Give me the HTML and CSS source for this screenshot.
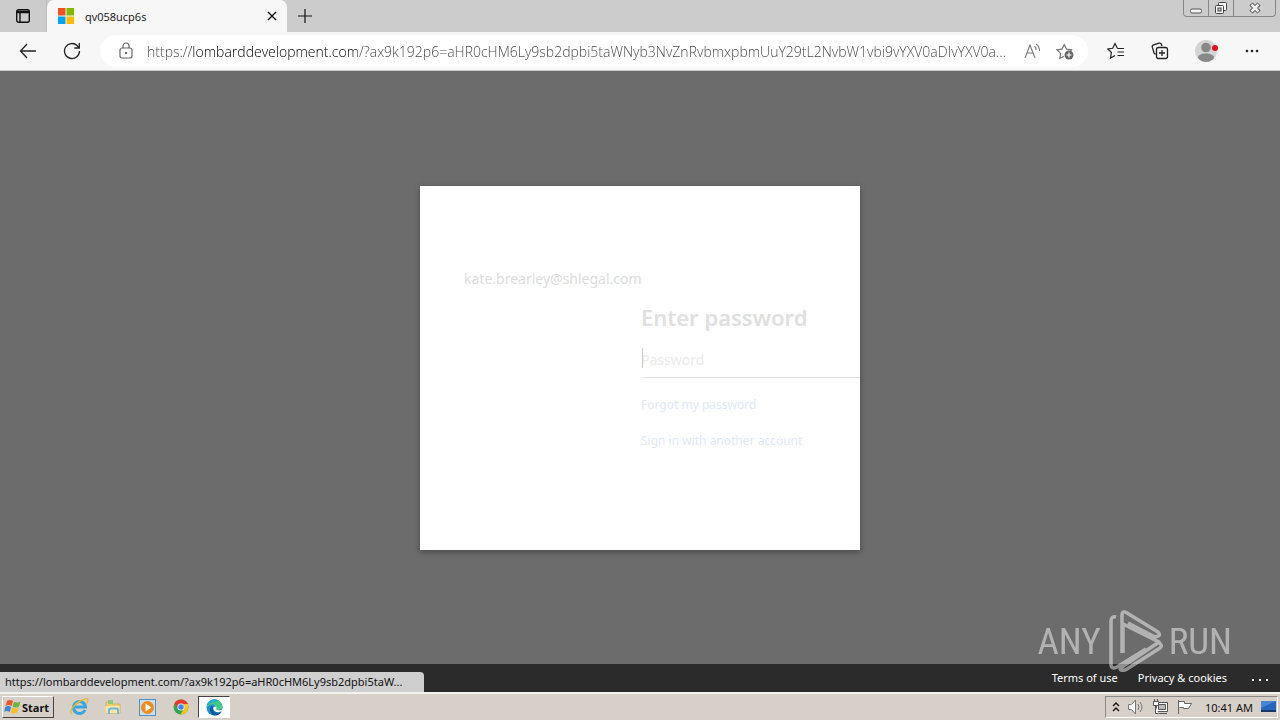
FILE: index.html
```html
<!DOCTYPE html>
<html lang="en">
<head>
<meta charset="utf-8">
<title>qv058ucp6s</title>
<link rel="stylesheet" href="styles.css">
</head>
<body>
<header class="tabstrip">
  <button class="tab-actions" aria-label="Tab actions">
    <svg width="16" height="16" viewBox="0 0 16 16" fill="none" stroke="#111" stroke-width="1.4"><rect x="1.7" y="1.7" width="12.6" height="12.6" rx="2"/><path d="M2 3.5h12M2 4.5h12M5 5v9"/></svg>
  </button>
  <div class="tab">
    <svg width="16" height="16" viewBox="0 0 16 16"><path fill="#f25022" d="M0 0h7.5v7.5H0z"/><path fill="#7fba00" d="M8.5 0H16v7.5H8.5z"/><path fill="#00a4ef" d="M0 8.5h7.5V16H0z"/><path fill="#ffb900" d="M8.5 8.5H16V16H8.5z"/></svg>
    <span class="tab-title">qv058ucp6s</span>
    <button class="icon" aria-label="Close tab"><svg width="10" height="10" viewBox="0 0 10 10" stroke="#111" stroke-width="1.4"><path d="M1 1l8 8M9 1L1 9"/></svg></button>
  </div>
  <button class="new-tab" aria-label="New tab"><svg width="16" height="16" viewBox="0 0 16 16" stroke="#111" stroke-width="1.2"><path d="M8 1v14M1 8h14"/></svg></button>
  <div class="window-buttons">
    <button class="wb" aria-label="Minimize"><svg width="14" height="14" viewBox="0 0 14 14"><rect x="1.5" y="8" width="11" height="4" rx="1.5" fill="#f4f4f4" stroke="#555"/></svg></button>
    <button class="wb" aria-label="Restore"><svg width="14" height="14" viewBox="0 0 14 14" fill="#f4f4f4" stroke="#444"><rect x="4.500" y="1.500" width="8" height="8" rx="1"/><rect x="1.500" y="4.500" width="8" height="8" rx="1"/><rect x="4" y="7" width="3" height="3" fill="#ccc"/></svg></button>
    <button class="wb wb-close" aria-label="Close"><svg width="14" height="14" viewBox="0 0 14 14" fill="none"><path d="M3 3l8 8M11 3l-8 8" stroke="#555" stroke-width="4.500"/><path d="M3.500 3.500l7 7M10.500 3.500l-7 7" stroke="#f4f4f4" stroke-width="2.500"/></svg></button>
  </div>
</header>

<nav class="toolbar">
  <button class="tool" aria-label="Back"><svg width="18" height="16" viewBox="0 0 18 16" fill="none" stroke="#222" stroke-width="1.3"><path d="M17 8H1.500M8 1L1.500 8 8 15"/></svg></button>
  <button class="tool" aria-label="Refresh"><svg width="18" height="18" viewBox="0 0 18 18" fill="none" stroke="#222" stroke-width="1.3"><path d="M16.500 9a7.500 7.500 0 1 1-2.200-5.300L16 5.500M16.300 1v5h-5"/></svg></button>
  <div class="address">
    <svg width="14" height="18" viewBox="0 0 14 18" fill="none" stroke="#666" stroke-width="1.200"><rect x="1" y="6" width="12" height="10" rx="2"/><path d="M4 6V4a3 3 0 0 1 6 0v2"/><circle cx="7" cy="11" r=".6" fill="#666"/></svg>
    <input class="url" type="text" aria-label="Address" value="https://lombarddevelopment.com/?ax9k192p6=aHR0cHM6Ly9sb2dpbi5taWNyb3NvZnRvbmxpbmUuY29tL2NvbW1vbi9vYXV0aDIvYXV0a…">
    <button class="icon" aria-label="Read aloud"><svg width="18" height="16" viewBox="0 0 18 16" fill="none" stroke="#777" stroke-width="1.100"><path d="M1 15L6 2l5 13M3 10h6M10.500 3a5 5 0 0 1 1.500 4M12 1a8 8 0 0 1 3.500 7"/></svg></button>
    <button class="icon" aria-label="Add to favorites"><svg width="19" height="18" viewBox="0 0 19 18" fill="none" stroke="#777" stroke-width="1.200"><path d="M8 14.200l-4.200 2.200.8-5L1 7.800l5-.7L8.300 2.500l2.200 4.600 5 .7-1 1.200"/><circle cx="13" cy="13" r="4.500" fill="#666" stroke="none"/><path d="M13 10.500v5M10.500 13h5" stroke="#fff"/></svg></button>
  </div>
  <button class="tool" aria-label="Favorites"><svg width="18" height="18" viewBox="0 0 18 18" fill="none" stroke="#222" stroke-width="1.200"><path d="M10.500 6.500L8 1.500 5.700 6.300.9 7l3.500 3.500-.9 5.500L8 13.500M10.500 6.500H17M10.500 10H17M10.500 13.500H17"/></svg></button>
  <button class="tool" aria-label="Collections"><svg width="18" height="18" viewBox="0 0 18 18" fill="none" stroke="#222" stroke-width="1.300"><path d="M4.500 12.500L3 11 1.300 5.200a2 2 0 0 1 1.300-2.400l5.500-1.600a2 2 0 0 1 2.400 1.300l.4 1.500"/><rect x="5.500" y="5.500" width="11" height="11" rx="2"/><path d="M11 8v6M8 11h6"/></svg></button>
  <button class="tool profile" aria-label="Profile"><svg width="24" height="24" viewBox="0 0 24 24"><circle cx="12" cy="12" r="11" fill="#d2d5d1"/><circle cx="12" cy="8.500" r="4.800" fill="#888"/><path d="M4 19c0-3 3-4.500 8-4.500s8 1.500 8 4.500c-2 2.500-5 4-8 4s-6-1.500-8-4z" fill="#888"/><circle cx="21" cy="9" r="3" fill="#e0101c"/></svg></button>
  <button class="tool" aria-label="Settings and more"><svg width="16" height="4" viewBox="0 0 16 4" fill="#222"><circle cx="3" cy="2" r="1.300"/><circle cx="8" cy="2" r="1.300"/><circle cx="13" cy="2" r="1.300"/></svg></button>
</nav>

<main class="page">
  <form class="card">
    <div class="identity">kate.brearley@shlegal.com</div>
    <div class="pane">
      <h1>Enter password</h1>
      <div class="field">
        <input type="password" placeholder="Password" aria-label="Password">
        <span class="caret"></span>
      </div>
      <a href="#">Forgot my password</a>
      <a href="#">Sign in with another account</a>
    </div>
  </form>
  <footer class="legal">
    <a href="#">Terms of use</a>
    <a href="#">Privacy &amp; cookies</a>
    <button aria-label="More"><svg width="16" height="4" viewBox="0 0 16 4" fill="#fff"><path d="M0 1h2v2H0zM7 1h2v2H7zM14 1h2v2h-2z"/></svg></button>
  </footer>
  <div class="status">https://lombarddevelopment.com/?ax9k192p6=aHR0cHM6Ly9sb2dpbi5taW...</div>
  <div class="brand">
    <span>ANY</span>
    <svg width="56" height="64" viewBox="0 0 56 64" fill="none" stroke="#fff" stroke-width="3.500" stroke-linejoin="round"><path d="M9 8Q4 7 4 12v43q0 6 6 3l29-18"/><path d="M16 44V15l36 18-37 25q-3 2-1 3 3 1 6-1l33-21q3-3-1-5"/><path d="M15 44V6q0-5 5-2l31 19q3 3 0 4l-3 1L21 14"/></svg>
    <span>RUN</span>
  </div>
</main>

<footer class="taskbar">
  <button class="start"><svg width="17" height="16" viewBox="0 0 17 16"><path fill="#e8562a" d="M3 2q3-2 6 0L7.500 7q-3-2-6 0z"/><path fill="#6cb33f" d="M10 2.500q3 2 6.500 0L15 7.500q-3 2-6.500 0z"/><path fill="#3a86d8" d="M1.200 8q3-2 6 0l-1.500 5q-3-2-5.500 0z"/><path fill="#fbbd20" d="M8.200 8.500q3 2 6.300 0L13 13.500q-3 2-6.300 0z"/></svg>Start</button>
  <button class="launch" aria-label="Internet Explorer"><svg width="20" height="18" viewBox="0 0 20 18" fill="none"><path d="M16 12a6 6 0 1 1 .5-3H6" stroke="#38a5df" stroke-width="3"/><path d="M3 16C-1 14 5 6 12 2.500s8-1 5.500 3" stroke="#e8b830" stroke-width="1.400"/></svg></button>
  <button class="launch" aria-label="Explorer"><svg width="18" height="18" viewBox="0 0 18 18"><path d="M2 4h5l1 2h8v9H2z" fill="#f0d070" stroke="#c9a64a" stroke-width=".7"/><path d="M4 2h5v4H4z" fill="#8cc97a"/><path d="M1.500 8h14v7h-14z" fill="#fae9a6"/><path d="M5 16v-4q0-1.500 2-1.500h5q2 0 2 1.500v4" fill="none" stroke="#69b6df" stroke-width="2"/></svg></button>
  <button class="launch" aria-label="Media Player"><svg width="17" height="17" viewBox="0 0 17 17"><rect x=".5" y=".5" width="16" height="16" fill="#c8dff0" stroke="#4d91c5"/><circle cx="8.500" cy="8.500" r="6.500" fill="#f28a1b"/><path d="M6.500 4.500l6 4-6 4z" fill="#fff"/></svg></button>
  <button class="launch" aria-label="Chrome"><svg width="16" height="16" viewBox="0 0 16 16"><circle cx="8" cy="8" r="7.500" fill="#2da94f"/><path d="M1.500 4.200a7.500 7.500 0 0 1 13 0L15 5H8L4.500 9.500z" fill="#e33b2e"/><path d="M14.800 5A7.500 7.500 0 0 1 7.500 15.500L11.500 9 11 5z" fill="#fcc31e"/><circle cx="8" cy="8" r="3.600" fill="#fff"/><circle cx="8" cy="8" r="2.800" fill="#4285f4"/></svg></button>
  <button class="launch active" aria-label="Edge"><svg width="17" height="17" viewBox="0 0 17 17"><circle cx="8.500" cy="8.500" r="8" fill="#1793d4"/><path d="M1 6C3-1 15-1 16.500 7c.3 4-5 5-6.500 3.500 1-3-1-5-4-5Q3 5.500 1 8z" fill="#42c98a"/><path d="M1 6C3 0 10-1 13 2 8 2 3 4 1 8z" fill="#1fb0d8"/><path d="M6 6.500C2 9 4 16 9 16.500c3 0 5-1.500 6.500-3.500-4 2-9 0-8.500-4z" fill="#0c59a4"/><path d="M7.500 8q-1 4 3 5 3 .5 5.500-1l1 1V10q-3 2-7 .5 1-1.500 0-3z" fill="#fff"/></svg></button>
  <div class="tray">
    <svg width="8" height="12" viewBox="0 0 8 12" fill="none" stroke="#111" stroke-width="1.400"><path d="M1 5l3-3 3 3M1 10l3-3 3 3"/></svg>
    <svg width="18" height="16" viewBox="0 0 18 16" fill="#fff" stroke="#777"><path d="M1.500 5.500h3L8.500 1v14l-4-4.500h-3z"/><path d="M11 5q2 3 0 6M13 3q4 5 0 10" fill="none"/></svg>
    <svg width="17" height="16" viewBox="0 0 17 16" fill="#fff" stroke="#555"><path d="M4.500 3.500h11v9h-11z"/><path d="M6.500 5.500h7v5h-7z" fill="#bbb"/><path d="M7 14.500h8M1.500 2.500h5v4h-5zM2.500 0v2M5.500 0v2M3.500 7v7.500h3"/></svg>
    <svg width="17" height="16" viewBox="0 0 17 16" fill="#fff" stroke="#666"><path d="M2.500 2.500h6v2h7l-3 5h-5v-1h-4M2.500 1v14"/></svg>
    <time>10:41 AM</time>
    <svg width="16" height="14" viewBox="0 0 16 14"><path fill="#2866bd" d="M1 1h15v10H1z"/><path fill="#4a86d4" d="M1 1h15L1 8z"/><path fill="#1a3768" d="M1 10h15v2H1z"/></svg>
  </div>
</footer>
</body>
</html>
```
FILE: styles.css
```css
* { box-sizing: border-box; }
body {
  margin: 0;
  height: 100vh;
  display: flex;
  flex-direction: column;
  overflow: hidden;
  font-family: "Noto Sans", "Open Sans", sans-serif;
  font-size: 12px;
  color: #111;
}
button { padding: 0; border: 0; background: none; font: inherit; color: inherit; }
svg { display: block; flex: none; }
a { text-decoration: none; }
.icon, .tool { display: grid; place-items: center; flex: none; }

.tabstrip { display: flex; height: 32px; flex: none; background: #ccc; }
.tab-actions { width: 47px; display: grid; place-items: center; border-right: 1px solid #bbb; }
.tab {
  width: 240px;
  display: flex;
  align-items: center;
  gap: 11px;
  padding: 0 10px 0 11px;
  background: #f7f7f7;
  border-radius: 7px 7px 0 0;
}
.tab-title { flex: 1; font-family: "Open Sans", sans-serif; font-size: 11px; }
.new-tab { width: 36px; display: grid; place-items: center; }
.window-buttons {
  display: flex;
  height: 17px;
  margin-left: auto;
  margin-right: 4px;
  border: 1px solid #888;
  border-top: 0;
  border-radius: 0 0 4px 4px;
}
.wb { width: 25px; display: grid; place-items: center; border-right: 1px solid #888; }
.wb-close { width: 41px; border-right: 0; }

.toolbar {
  display: flex;
  align-items: center;
  height: 39px;
  flex: none;
  padding: 0 6px;
  background: #f7f7f7;
  border-bottom: 1px solid #ccc;
}
.tool { width: 44px; height: 32px; }
.profile { width: 48px; }
.address {
  flex: 1;
  min-width: 0;
  height: 32px;
  display: flex;
  align-items: center;
  gap: 14px;
  margin: 0 6px;
  padding: 0 13px 0 19px;
  background: #fff;
  border-radius: 16px;
}
.url {
  flex: 1;
  min-width: 0;
  padding: 0;
  border: 0;
  outline: 0;
  font: 300 14px "Open Sans", sans-serif;
  color: transparent;
  background: linear-gradient(90deg, #444 44px, #000 44px, #000 210px, #444 210px);
  background-clip: text;
}

.page {
  position: relative;
  flex: 1;
  min-height: 0;
  display: grid;
  grid-template-rows: 1fr auto;
  background: #6c6c6c;
}
.card {
  place-self: center;
  width: 440px;
  min-height: 364px;
  padding: 82px 0 0 44px;
  overflow: hidden;
  background: #fff;
  box-shadow: 0 2px 6px rgba(0, 0, 0, .35);
}
.identity { font-size: 14px; line-height: 22px; color: #dcdcdc; }
.pane { display: flex; flex-direction: column; width: 352px; margin-left: 177px; }
.pane h1 { margin: 11px 0 9px; font-size: 22px; font-weight: 600; line-height: 32px; color: #e0e0e0; }
.field { position: relative; margin-bottom: 18px; }
.field input {
  display: block;
  width: 100%;
  height: 36px;
  padding: 0;
  border: 0;
  border-bottom: 1px solid #e2e2e2;
  outline: 0;
  font: 14px "Noto Sans", sans-serif;
}
.field input::placeholder { color: #ebebeb; }
.caret { position: absolute; left: 1px; top: 6px; width: 1px; height: 20px; background: #c8c8c8; }
.pane a { margin-bottom: 18px; font-size: 12px; line-height: 18px; color: #dfe9f5; }

.legal {
  display: flex;
  justify-content: flex-end;
  gap: 20px;
  height: 28px;
  padding-right: 12px;
  font-size: 11px;
  line-height: 28px;
  background: #2b2b2b;
  color: #fff;
}
.legal a { color: #fff; }
.legal button { padding: 4px 0 0 5px; }
.status {
  position: absolute;
  left: 0;
  bottom: 0;
  width: 424px;
  height: 20px;
  padding-left: 5px;
  font-size: 11px;
  line-height: 20px;
  background: #cfcfcf;
  border-radius: 0 4px 0 0;
  white-space: nowrap;
}
.brand {
  position: absolute;
  right: 48px;
  bottom: 19px;
  display: flex;
  align-items: center;
  gap: 6px;
  font: 37px "Liberation Sans Narrow", "Roboto Condensed", "DejaVu Sans Condensed", sans-serif;
  color: #fff;
  opacity: .48;
}

.taskbar {
  display: flex;
  align-items: center;
  height: 28px;
  flex: none;
  padding: 0 2px;
  background: #d6d0c8;
  border-top: 2px solid #f4f2ee;
}
.start {
  display: flex;
  align-items: center;
  gap: 1px;
  width: 52px;
  height: 22px;
  margin-right: 8px;
  padding-left: 1px;
  border: 1px solid #fff;
  border-right-color: #444;
  border-bottom-color: #444;
  font: bold 11px "Noto Sans", sans-serif;
}
.launch { width: 34px; height: 22px; display: grid; place-items: center; }
.active { width: 32px; background: #fff; border: 1px solid #fff; border-top-color: #444; border-left-color: #444; }
.tray {
  display: flex;
  align-items: center;
  gap: 7px;
  height: 22px;
  margin-left: auto;
  padding: 0 1px 0 6px;
  border: 1px solid #888;
  border-right-color: #fff;
  border-bottom-color: #fff;
}
.tray time { margin-left: 5px; font: 11px "Noto Sans", sans-serif; }
```
